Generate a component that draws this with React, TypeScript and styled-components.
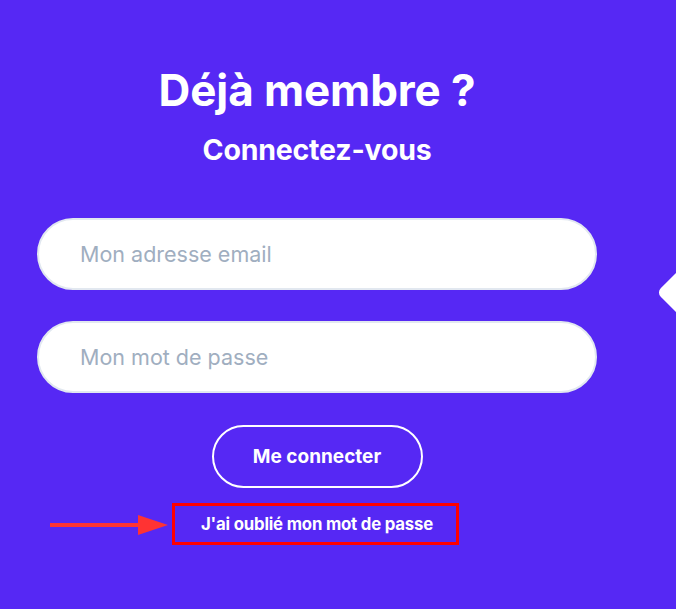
import React from 'react';
import styled, { createGlobalStyle } from 'styled-components';

const GlobalStyle = createGlobalStyle`
  html, body {
    margin: 0;
    padding: 0;
    background: #5628f4;
  }
  body {
    font-family: Inter, "Open Sans", sans-serif;
    overflow: hidden;
  }
`;

const Page = styled.div`
  position: relative;
  width: 676px;
  height: 609px;
  overflow: hidden;
  background: #5628f4;
`;

const Form = styled.form`
  width: 560px;
  margin-left: 37px;
  padding-top: 63px;
  display: flex;
  flex-direction: column;
  align-items: center;
`;

const Heading = styled.h1`
  margin: 0;
  color: #fff;
  font-size: 44px;
  font-weight: 700;
  line-height: 54px;
  letter-spacing: -0.1px;
`;

const Subheading = styled.h2`
  margin: 16px 0 0;
  color: #fff;
  font-size: 28.5px;
  font-weight: 700;
  line-height: 34px;
  letter-spacing: -0.2px;
`;

const Fields = styled.div`
  width: 100%;
  display: flex;
  flex-direction: column;
  gap: 31px;
  margin-top: 51px;
`;

const Input = styled.input`
  box-sizing: border-box;
  width: 100%;
  height: 72px;
  padding: 0 41px;
  border: 2px solid #e2e8f0;
  border-radius: 36px;
  background: #fff;
  font-family: inherit;
  font-size: 21.5px;
  color: #2d3748;
  outline: none;

  &::placeholder {
    color: #a0aec0;
  }
`;

const SubmitButton = styled.button`
  box-sizing: border-box;
  width: 211px;
  height: 63px;
  margin-top: 32px;
  border: 2px solid #fff;
  border-radius: 32px;
  background: transparent;
  color: #fff;
  font-family: inherit;
  font-size: 19px;
  font-weight: 700;
  cursor: pointer;
`;

const LinkRow = styled.div`
  position: relative;
  margin-top: 15px;
  margin-right: 4px;
`;

const ForgotLink = styled.a`
  box-sizing: border-box;
  display: flex;
  align-items: center;
  justify-content: center;
  width: 287px;
  height: 42px;
  padding-left: 4px;
  border: 3px solid #ff0000;
  color: #fff;
  font-size: 16.8px;
  font-weight: 700;
  letter-spacing: -0.2px;
  text-decoration: none;
`;

const Arrow = styled.svg`
  position: absolute;
  left: -122px;
  top: 10px;
`;

const SideTab = styled.div`
  position: absolute;
  left: 689px;
  top: 260px;
  width: 46px;
  height: 46px;
  border-radius: 6px;
  background: #fff;
  transform: rotate(45deg);
  transform-origin: 0 0;
`;

export default function App() {
  return (
    <Page>
      <GlobalStyle />
      <Form onSubmit={(e) => e.preventDefault()}>
        <Heading>Déjà membre ?</Heading>
        <Subheading>Connectez-vous</Subheading>
        <Fields>
          <Input type="email" placeholder="Mon adresse email" />
          <Input type="password" placeholder="Mon mot de passe" />
        </Fields>
        <SubmitButton type="submit">Me connecter</SubmitButton>
        <LinkRow>
          <Arrow width="120" height="24" viewBox="0 0 120 24">
            <rect x="0" y="10" width="92" height="4" fill="#ff3333" />
            <polygon points="88,2 118,12 88,22" fill="#ff3333" />
          </Arrow>
          <ForgotLink href="#">J'ai oublié mon mot de passe</ForgotLink>
        </LinkRow>
      </Form>
      <SideTab />
    </Page>
  );
}
